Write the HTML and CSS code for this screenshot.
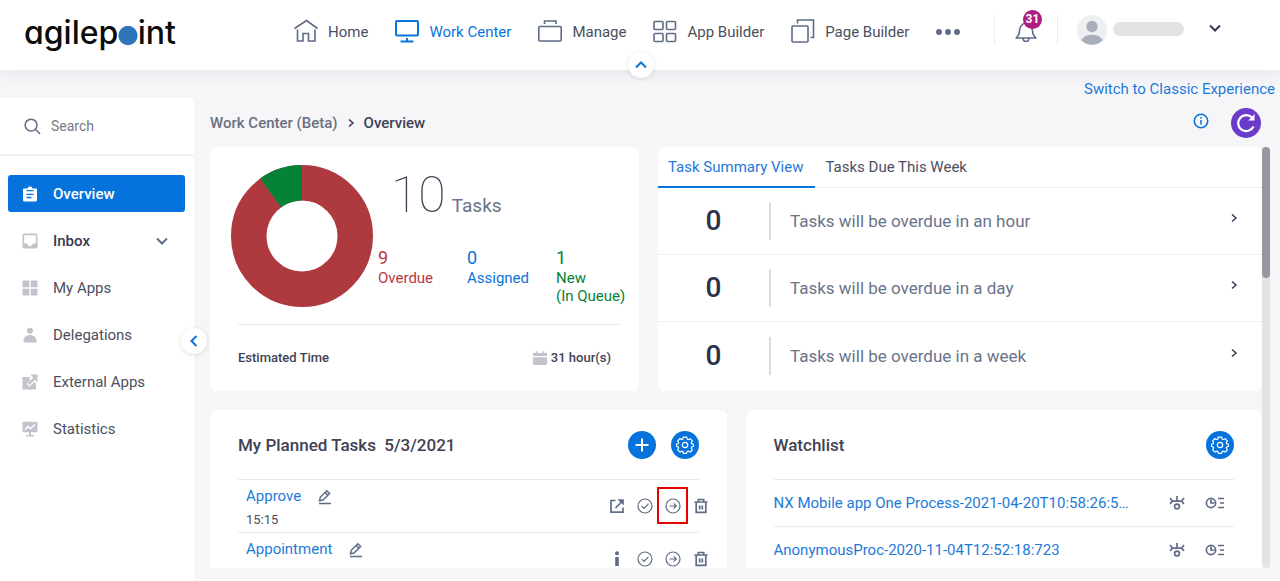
FILE: index.html
```html
<!DOCTYPE html>
<html lang="en">
<head>
<meta charset="utf-8">
<title>Work Center</title>
<link rel="stylesheet" href="styles.css">
</head>
<body class="page">
<svg class="sprite" aria-hidden="true">
  <symbol id="gear" viewBox="0 0 18 18"><path d="M7.3 1.2h3.4l.5 2 1 .5 2-1 2.1 2.1-1 2 .4 1 2 .6v1.9l-2 .7-.4 1 1 2-2.2 2.1-2-.9-1 .4-.6 1.7H7.4l-.6-1.8-1-.4-1.9 1-2.2-2.2.9-1.9-.4-1-1.8-.7V8.300l1.800-.6.4-1-.9-1.900 2.200-2.200 1.900 1 1-.5z"/><circle cx="9" cy="9" r="2.700"/></symbol>
  <symbol id="pencil" viewBox="0 0 16 16"><path d="M2 14.500h12M2.500 11.800l.7-3.500L9.800 1.700l2.800 2.800L6 11.100zM8.200 3.600l2.700 2.700"/></symbol>
  <symbol id="check" viewBox="0 0 18 18"><circle cx="9" cy="9" r="7"/><path d="M5.800 9.300l2.300 2.200 4.300-4.600"/></symbol>
  <symbol id="forward" viewBox="0 0 18 18"><circle cx="9" cy="9" r="7"/><path d="M5.500 9h6.500M9.600 6.400L12.300 9l-2.700 2.600"/></symbol>
  <symbol id="trash" viewBox="0 0 18 18"><path d="M2.500 5h13M6.300 4.500V2.500h5.400v2M4.200 5.500v9.800h9.600V5.500M7.700 8.500v4M10.300 8.500v4"/></symbol>
  <symbol id="eye" viewBox="0 0 18 18"><circle cx="9" cy="12.500" r="2.400"/><path d="M2 4l2.500 3.200L2 9.800M4.500 7.200h9M16 4l-2.500 3.200L16 9.800M9 2v4.800"/></symbol>
  <symbol id="history" viewBox="0 0 22 18"><circle cx="7" cy="9" r="4.600"/><path d="M7 5.500V9h3.500L7 9M14 4.500h6M16 9h4M14 13.500h6"/></symbol>
  <symbol id="right" viewBox="0 0 12 12"><path d="M4 2.500L8 6l-4 3.500"/></symbol>
</svg>

<header class="topbar">
  <a class="logo" href="#">agilep<span class="logo-dot">o</span>int</a>
  <nav class="topnav">
    <a class="topnav-item" href="#"><svg class="icon-24" viewBox="0 0 24 24"><path d="M.5 9.500L12.500 1.500l11 8M3.500 10.500V22h5.500v-7.500h5.500V22H21V10.500"/></svg>Home</a>
    <a class="topnav-item current" href="#"><svg class="icon-24" viewBox="0 0 24 24"><rect x="1" y="2" width="22" height="14.500" rx="1"/><path d="M5.500 22.500h13M12 19v3.500"/></svg>Work Center</a>
    <a class="topnav-item" href="#"><svg class="icon-24" viewBox="0 0 24 24"><rect x=".8" y="7.500" width="22.400" height="14.500" rx="1"/><path d="M6.500 5V2h11.500v3"/></svg>Manage</a>
    <a class="topnav-item" href="#"><svg class="icon-24" viewBox="0 0 24 24"><rect x="1" y="2.500" width="9" height="8" rx="1"/><rect x="13.500" y="2.500" width="9" height="8" rx="1"/><rect x="1" y="14.500" width="9" height="8" rx="1"/><rect x="13.500" y="14.500" width="9" height="8" rx="1"/></svg>App Builder</a>
    <a class="topnav-item" href="#"><svg class="icon-24" viewBox="0 0 24 24"><rect x="1" y="7" width="16" height="16" rx="1"/><path d="M6.500 4.500V1h16v17.500h-3"/></svg>Page Builder</a>
    <button class="icon-button" aria-label="More"><svg class="dots" viewBox="0 0 24 8"><circle cx="3" cy="4" r="3"/><circle cx="12" cy="4" r="3"/><circle cx="21" cy="4" r="3"/></svg></button>
  </nav>
  <div class="account">
    <button class="bell" aria-label="Notifications"><svg class="icon-24" viewBox="0 0 24 24"><path d="M2.500 20h19l-2.500-4c-.8-4-.2-10-7-11-6.800 1-6.200 7-7 11zM9 20.500c.3 4 5.700 4 6 0"/></svg><span class="badge">31</span></button>
    <svg class="avatar" viewBox="0 0 30 30"><circle cx="15" cy="15" r="15" fill="#eeeff1"/><circle cx="15" cy="11.500" r="5.700" fill="#a9afbd"/><path d="M4 25c5-7 17-7 22 0-5 6.300-17 6.300-22 0z" fill="#a9afbd"/></svg>
    <span class="user-name"></span>
    <button class="icon-button account-menu" aria-label="Account menu"><svg class="icon-14" viewBox="0 0 14 14"><path d="M2 4.500l5 5 5-5"/></svg></button>
  </div>
  <button class="round-toggle collapse-top" aria-label="Collapse header"><svg class="icon-14" viewBox="0 0 14 14"><path d="M2 9.500l5-5 5 5"/></svg></button>
</header>

<div class="switch-bar"><a class="link" href="#">Switch to Classic Experience</a></div>

<div class="workspace">
  <aside class="sidebar">
    <label class="search"><svg class="search-icon" viewBox="0 0 18 18"><circle cx="7.500" cy="7.500" r="6.300"/><path d="M12 12l5 5"/></svg><input class="search-input" type="text" placeholder="Search" aria-label="Search"></label>
    <nav class="sidenav">
      <a class="sidenav-item selected" href="#"><svg class="icon-16" viewBox="0 0 16 16"><path d="M2 2.500h3.500a2.500 2 0 0 1 5 0H14a1 1 0 0 1 1 1V14a1.500 1.500 0 0 1-1.500 1.500h-11A1.500 1.500 0 0 1 1 14V3.500a1 1 0 0 1 1-1z"/><path class="cut" d="M4.500 4.700h7M4.500 8.300h7M4.500 11.500h5"/></svg>Overview</a>
      <a class="sidenav-item strong" href="#"><svg class="icon-16" viewBox="0 0 16 16"><path fill-rule="evenodd" d="M2 .5h12A1.500 1.500 0 0 1 15.500 2v12a1.500 1.500 0 0 1-1.500 1.500H2A1.500 1.500 0 0 1 .5 14V2A1.500 1.500 0 0 1 2 .5zM2.200 2.200v8.300h3c.8 3.500 4.800 3.500 5.600 0h3V2.200z"/></svg>Inbox<svg class="icon-14 expand" viewBox="0 0 14 14"><path d="M2 4.500l5 5 5-5"/></svg></a>
      <a class="sidenav-item" href="#"><svg class="icon-16" viewBox="0 0 16 16"><path d="M.5 1.500a1 1 0 0 1 1-1h5.800v6.800H.5zM8.700.5h5.800a1 1 0 0 1 1 1v5.800H8.700zM.5 8.700h6.800v6.800H1.500a1 1 0 0 1-1-1zM8.700 8.700h6.800v5.800a1 1 0 0 1-1 1H8.700z"/></svg>My Apps</a>
      <a class="sidenav-item" href="#"><svg class="icon-16" viewBox="0 0 16 16"><circle cx="8" cy="3.800" r="3"/><path d="M1.500 15.500V14c0-8 13-8 13 0v1.500z"/></svg>Delegations</a>
      <a class="sidenav-item" href="#"><svg class="icon-16" viewBox="0 0 16 16"><path d="M.5 3h8L7 4.500 8.500 6 4.500 10l2.800 2.800L12.500 8l1.500 1.500v6H.5z"/><path d="M8.500.5h7v8l-2.700-2.700-5.500 5.400-1.800-1.700L11.200 4z"/></svg>External Apps</a>
      <a class="sidenav-item" href="#"><svg class="icon-16" viewBox="0 0 16 16"><path d="M1.500.8h13a1 1 0 0 1 1 1v8.400a1 1 0 0 1-1 1H9V14h3v1.500H4V14h3v-2.800H1.500a1 1 0 0 1-1-1V1.800a1 1 0 0 1 1-1z"/><path class="cut-light" d="M3 8.500l3-3 2.500 2 4.500-4"/></svg>Statistics</a>
    </nav>
    <button class="round-toggle collapse-side" aria-label="Collapse menu"><svg class="icon-14" viewBox="0 0 14 14"><path d="M9.500 2l-5 5 5 5"/></svg></button>
  </aside>

  <main class="main">
    <div class="main-head">
      <div class="crumbs"><span>Work Center (Beta)</span><svg class="crumb-arrow" viewBox="0 0 12 12"><path d="M4 2.500L8 6l-4 3.500"/></svg><span class="crumb-current">Overview</span></div>
      <div class="head-tools">
        <button class="icon-button info" aria-label="Information"><svg class="icon-16" viewBox="0 0 16 16"><circle cx="8" cy="8" r="6.700"/><path d="M8 7v4.500M8 4.200v1.600"/></svg></button>
        <button class="refresh" aria-label="Refresh"><svg class="refresh-icon" viewBox="0 0 20 20"><path d="M17.500 13.500a8 8 0 1 1-1.300-8.700" fill="none" stroke="#fff" stroke-width="2.200"/><path d="M18.500 1v6.500h-6.200z" fill="#fff"/></svg></button>
      </div>
    </div>

    <div class="scroller">
      <div class="cards">
        <div class="row row-top">
          <section class="card">
            <div class="summary">
              <svg class="donut" viewBox="0 0 142 142"><circle cx="71" cy="71" r="53.250" fill="none" stroke="#ae393e" stroke-width="35.500"/><circle cx="71" cy="71" r="53.250" fill="none" stroke="#058237" stroke-width="35.500" pathLength="100" stroke-dasharray="10 90" transform="rotate(-126 71 71)"/></svg>
              <div class="figures">
                <div class="total"><span class="total-number">10</span><span class="total-label">Tasks</span></div>
                <div class="counts">
                  <div class="count overdue"><span class="count-number">9</span><span>Overdue</span></div>
                  <div class="count assigned"><span class="count-number">0</span><span>Assigned</span></div>
                  <div class="count new"><span class="count-number">1</span><span>New<br>(In Queue)</span></div>
                </div>
              </div>
            </div>
            <div class="estimate"><span>Estimated Time</span><span class="hours"><svg class="calendar" viewBox="0 0 14 14"><path d="M0 2h2.500V.3h2V2h5V.3h2V2H14v3H0zM0 6.200h14V13a1 1 0 0 1-1 1H1a1 1 0 0 1-1-1z"/></svg>31 hour(s)</span></div>
          </section>

          <section class="card">
            <div class="tabs"><button class="tab active">Task Summary View</button><button class="tab">Tasks Due This Week</button></div>
            <ul class="due-list">
              <li class="due"><span class="due-count">0</span><span class="due-text">Tasks will be overdue in an hour</span><svg class="due-arrow"><use href="#right"/></svg></li>
              <li class="due"><span class="due-count">0</span><span class="due-text">Tasks will be overdue in a day</span><svg class="due-arrow"><use href="#right"/></svg></li>
              <li class="due"><span class="due-count">0</span><span class="due-text">Tasks will be overdue in a week</span><svg class="due-arrow"><use href="#right"/></svg></li>
            </ul>
          </section>
        </div>

        <div class="row row-bottom">
          <section class="card panel">
            <div class="panel-head">
              <h2 class="panel-title">My Planned Tasks <span class="panel-date">5/3/2021</span></h2>
              <button class="disc" aria-label="Add"><svg class="icon-14 plus" viewBox="0 0 14 14"><path d="M7 .5v13M.5 7h13"/></svg></button>
              <button class="disc" aria-label="Settings"><svg class="gear"><use href="#gear"/></svg></button>
            </div>
            <ul class="panel-list">
              <li class="task">
                <div class="task-info"><div class="task-name"><a class="link" href="#">Approve</a><button class="icon-button" aria-label="Edit"><svg class="tool-16"><use href="#pencil"/></svg></button></div><span class="task-time">15:15</span></div>
                <div class="actions">
                  <button class="icon-button" aria-label="Open"><svg class="tool-18" viewBox="0 0 18 18"><path d="M7.500 3.500H3v11.700h12v-4.700M7.500 11l6-6"/><path class="solid" d="M9.500 2.300h6.300v6.200z"/></svg></button>
                  <button class="icon-button" aria-label="Complete"><svg class="tool-18 thin"><use href="#check"/></svg></button>
                  <button class="icon-button marked" aria-label="Reassign"><svg class="tool-18 thin"><use href="#forward"/></svg></button>
                  <button class="icon-button" aria-label="Delete"><svg class="tool-18"><use href="#trash"/></svg></button>
                </div>
              </li>
              <li class="task">
                <div class="task-info"><div class="task-name"><a class="link" href="#">Appointment</a><button class="icon-button" aria-label="Edit"><svg class="tool-16"><use href="#pencil"/></svg></button></div></div>
                <div class="actions">
                  <button class="icon-button" aria-label="Details"><svg class="tool-18" viewBox="0 0 18 18"><circle class="solid" cx="9" cy="3.200" r="2"/><path class="solid" d="M7.200 7h3.600v9H7.200z"/></svg></button>
                  <button class="icon-button" aria-label="Complete"><svg class="tool-18 thin"><use href="#check"/></svg></button>
                  <button class="icon-button" aria-label="Reassign"><svg class="tool-18 thin"><use href="#forward"/></svg></button>
                  <button class="icon-button" aria-label="Delete"><svg class="tool-18"><use href="#trash"/></svg></button>
                </div>
              </li>
            </ul>
          </section>

          <section class="card panel">
            <div class="panel-head">
              <h2 class="panel-title">Watchlist</h2>
              <button class="disc" aria-label="Settings"><svg class="gear"><use href="#gear"/></svg></button>
            </div>
            <ul class="panel-list">
              <li class="watch"><a class="link watch-name" href="#">NX Mobile app One Process-2021-04-20T10:58:26:5…</a><button class="icon-button" aria-label="Watch"><svg class="tool-18"><use href="#eye"/></svg></button><button class="icon-button" aria-label="History"><svg class="tool-22"><use href="#history"/></svg></button></li>
              <li class="watch"><a class="link watch-name" href="#">AnonymousProc-2020-11-04T12:52:18:723</a><button class="icon-button" aria-label="Watch"><svg class="tool-18"><use href="#eye"/></svg></button><button class="icon-button" aria-label="History"><svg class="tool-22"><use href="#history"/></svg></button></li>
            </ul>
          </section>
        </div>
      </div>
      <div class="scroll-track"><div class="scroll-thumb"></div></div>
    </div>
  </main>
</div>
</body>
</html>
```
FILE: styles.css
```css
*, *::after { box-sizing: border-box; }

.page {
  margin: 0;
  height: 100vh;
  display: flex;
  flex-direction: column;
  overflow: hidden;
  background: #f6f6f9;
  color: #3f4254;
  font: 400 15px/20px Roboto, "Liberation Sans", sans-serif;
}

a { color: inherit; text-decoration: none; }
button { border: 0; padding: 0; background: none; color: inherit; font: inherit; cursor: pointer; }
svg { display: block; flex: none; fill: none; stroke: currentColor; }
ul { list-style: none; margin: 0; padding: 0; }

.sprite { position: absolute; width: 0; height: 0; }
.link { color: #1d7ad9; }
.icon-button { display: flex; color: #5f6c86; }
.icon-24 { width: 24px; height: 24px; stroke-width: 1.600; }
.icon-16 { width: 16px; height: 16px; }
.icon-14 { width: 14px; height: 14px; stroke-width: 2; }
.tool-16 { width: 16px; height: 16px; stroke-width: 1.500; }
.tool-18 { width: 18px; height: 18px; stroke-width: 1.700; }
.tool-22 { width: 22px; height: 18px; stroke-width: 1.700; }
.thin { stroke-width: 1.200; }
.solid { fill: currentColor; stroke: none; }

/* Top bar */
.topbar {
  position: relative;
  z-index: 2;
  display: flex;
  flex: none;
  align-items: center;
  height: 70px;
  padding: 0 58px 0 24px;
  background: #fff;
  box-shadow: 0 1px 16px rgba(60, 60, 80, 0.1);
}
.logo {
  width: 270px;
  padding-bottom: 4px;
  color: #0c0c0c;
  font: 500 32px/40px Inter, Lato, sans-serif;
  font-feature-settings: "cv11";
}
.logo-dot { color: #2f75bb; background: radial-gradient(circle at 50% 58%, #2f75bb 9px, transparent 10px); }
.topnav { display: flex; align-items: center; gap: 27px; padding-bottom: 7px; }
.topnav-item { display: flex; align-items: center; gap: 10px; line-height: 24px; white-space: nowrap; color: #4b4f5e; }
.topnav-item svg { color: #5f6c86; margin-top: -2px; }
.topnav-item.current, .topnav-item.current svg { color: #0874dc; }
.topnav-item.current svg { stroke-width: 2; }
.dots { width: 24px; height: 8px; fill: currentColor; stroke: none; }
.account { display: flex; align-items: center; margin-left: auto; padding-bottom: 10px; }
.bell {
  position: relative;
  display: flex;
  align-items: center;
  justify-content: center;
  width: 64px;
  height: 30px;
  border: solid #ebedf0;
  border-width: 0 1px;
  color: #5f6c86;
}
.badge {
  position: absolute;
  top: -5px;
  left: 28px;
  width: 19px;
  height: 19px;
  border-radius: 50%;
  background: #ad1e80;
  color: #fff;
  font-size: 12px;
  font-weight: 700;
  line-height: 19px;
}
.avatar { width: 30px; height: 30px; margin-left: 19px; stroke: none; }
.user-name { width: 71px; height: 14px; margin: 0 24px 3px 6px; border-radius: 7px; background: #e3e3e3; }
.account-menu { color: #343a50; padding-bottom: 4px; }
.round-toggle {
  position: absolute;
  display: flex;
  align-items: center;
  justify-content: center;
  width: 26px;
  height: 26px;
  border-radius: 50%;
  background: #fff;
  color: #0874dc;
  box-shadow: 0 1px 4px rgba(60, 60, 80, 0.16);
}
.collapse-top { bottom: -8px; left: 50%; margin-left: -12px; }
.collapse-side { right: -13px; top: 230px; z-index: 1; }

.switch-bar { flex: none; height: 28px; padding: 9px 5px 0; text-align: right; }

/* Workspace */
.workspace { display: flex; flex: 1; min-height: 0; border-bottom: 2px solid #fff; }
.sidebar { position: relative; flex: none; width: 194px; background: #fff; }
.search { display: flex; align-items: center; gap: 10px; height: 58px; padding: 0 8px 0 24px; border-bottom: 2px solid #f2f2f5; color: #5f6c86; }
.search-icon { width: 17px; height: 17px; stroke-width: 1.600; }
.search-input { width: 100%; min-width: 0; padding: 0; border: 0; outline: 0; background: none; color: #3f4254; font: 400 14px/20px Roboto, sans-serif; }
.search-input::placeholder { color: #777a80; opacity: 1; }
.sidenav { display: flex; flex-direction: column; gap: 10px; padding: 19px 9px 0 8px; }
.sidenav-item { display: flex; align-items: center; gap: 15px; height: 37px; padding: 0 16px 0 14px; border-radius: 3px; color: #4b4f5e; }
.sidenav-item > .icon-16 { fill: #c1c4cb; stroke: none; margin-top: 1px; }
.sidenav-item.selected { background: #0573db; color: #fff; font-weight: 500; }
.sidenav-item.selected > .icon-16 { fill: #fff; }
.sidenav-item.strong { color: #343a50; font-weight: 500; }
.cut { stroke: #0573db; stroke-width: 1.300; fill: none; }
.cut-light { stroke: #fff; stroke-width: 1.500; fill: none; }
.expand { margin-left: auto; color: #5f6c86; }

.main { display: flex; flex-direction: column; flex: 1; min-width: 0; padding: 0 10px 11px 16px; }
.main-head { display: flex; flex: none; align-items: center; justify-content: space-between; height: 49px; padding-right: 9px; }
.crumbs { display: flex; align-items: center; gap: 7px; font-weight: 500; color: #6a7080; }
.crumb-arrow { width: 12px; height: 12px; stroke-width: 1.500; color: #343a50; }
.crumb-current { color: #3f4254; }
.head-tools { display: flex; align-items: center; gap: 22px; }
.info { color: #0874dc; padding-bottom: 4px; }
.info svg { stroke-width: 1.600; }
.refresh { display: flex; align-items: center; justify-content: center; width: 30px; height: 30px; border-radius: 50%; background: #6b3ccc; }
.refresh-icon { width: 20px; height: 20px; stroke: none; }

.scroller { display: flex; flex: 1; min-height: 0; overflow: hidden; }
.cards { flex: 1; min-width: 0; }
.scroll-track { flex: none; width: 8px; border-radius: 4px; background: #e3e3e3; }
.scroll-thumb { height: 131px; border-radius: 4px; background: #95989f; }
.row { display: grid; gap: 19px; margin-bottom: 19px; }
.row-top { grid-template-columns: 429fr 604fr; }
.row-bottom { grid-template-columns: 1fr 1fr; }
.card { min-width: 0; border-radius: 7px; background: #fff; }

/* Task totals */
.summary { display: flex; gap: 5px; padding: 18px 0 17px 21px; }
.donut { width: 142px; height: 142px; stroke: none; }
.figures { flex: 1; }
.total { display: flex; align-items: baseline; gap: 6px; padding-left: 13px; margin-bottom: 22px; }
.total-number { font-size: 50px; font-weight: 100; line-height: 60px; color: #3f4254; }
.total-label { font-size: 19px; color: #6a7389; }
.counts { display: grid; grid-template-columns: repeat(3, 71px); column-gap: 18px; line-height: 18px; }
.count { display: flex; flex-direction: column; white-space: nowrap; }
.count-number { font-size: 18px; line-height: 22px; }
.overdue { color: #b8393f; }
.assigned { color: #0874dc; }
.new { color: #058237; }
.estimate { display: flex; justify-content: space-between; margin: 0 19px 0 28px; padding: 23px 9px 23px 0; border-top: 1px solid #e9eaec; font-size: 13px; font-weight: 500; }
.hours { display: flex; align-items: center; gap: 4px; }
.calendar { width: 14px; height: 14px; fill: #c1c4cb; stroke: none; }

/* Due list */
.tabs { display: flex; height: 41px; border-bottom: 1px solid #eceef0; }
.tab { height: 41px; padding: 0 10px; border-bottom: 2px solid transparent; color: #4b4f5e; }
.tab.active { padding-right: 12px; color: #1d7ad9; border-color: #0874dc; }
.due { display: flex; align-items: center; height: 67px; padding-right: 22px; border-bottom: 1px solid #eceef0; }
.due:last-child { border-bottom: 0; }
.due-count { width: 113px; line-height: 38px; border-right: 2px solid #d9dce4; text-align: center; font-size: 28px; font-weight: 500; color: #2c3249; }
.due-text { flex: 1; padding-left: 19px; font-size: 17px; color: #6a7389; }
.due-arrow { width: 12px; height: 12px; margin-bottom: 6px; stroke-width: 1.500; color: #343a50; }

/* Panels */
.panel { padding: 0 28px; }
.panel-head { display: flex; align-items: center; gap: 15px; height: 69px; }
.panel-title { flex: 1; margin: 0; font-size: 17px; font-weight: 500; }
.panel-date { margin-left: 4px; }
.disc { display: flex; align-items: center; justify-content: center; width: 28px; height: 28px; border-radius: 50%; background: #0573db; color: #fff; }
.gear { width: 18px; height: 18px; stroke-width: 1.200; }
.task { display: flex; align-items: center; justify-content: space-between; height: 53px; padding-left: 8px; border-top: 1px solid #e9eaec; }
.task-info { align-self: flex-start; padding-top: 6px; }
.task-name { display: flex; align-items: center; gap: 16px; line-height: 21px; }
.task-time { display: block; padding-top: 3px; font-size: 13px; color: #4b4f5e; }
.actions { display: flex; gap: 10px; margin-right: -11px; }
.marked { position: relative; }
.marked::after { content: ""; position: absolute; top: -10px; left: -7px; width: 31px; height: 37px; border: 2px solid #e60000; }
.watch { display: flex; align-items: center; gap: 18px; height: 47px; padding-right: 8px; border-top: 1px solid #e9eaec; }
.watch-name { flex: 1; min-width: 0; overflow: hidden; white-space: nowrap; text-overflow: ellipsis; }
```
